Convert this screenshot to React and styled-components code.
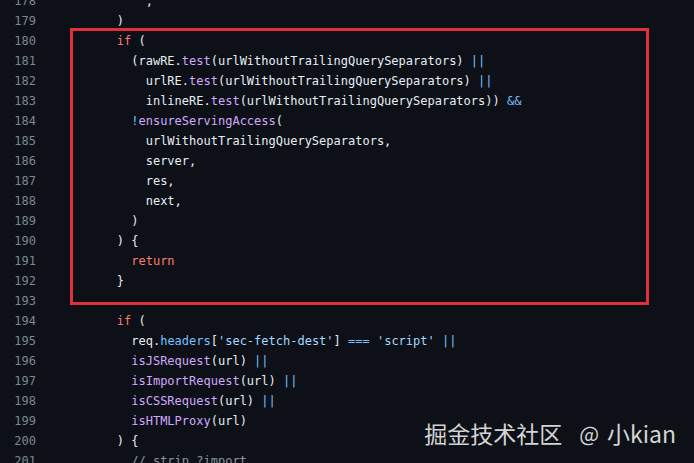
import styled, { createGlobalStyle } from "styled-components";

const lines = [
  { n: 178, t: [["", "            ,"]] },
  { n: 179, t: [["", "        )"]] },
  { n: 180, t: [["", "        "], ["kw", "if"], ["", " ("]] },
  { n: 181, t: [["", "          (rawRE."], ["fn", "test"], ["", "(urlWithoutTrailingQuerySeparators) "], ["op", "||"]] },
  { n: 182, t: [["", "            urlRE."], ["fn", "test"], ["", "(urlWithoutTrailingQuerySeparators) "], ["op", "||"]] },
  { n: 183, t: [["", "            inlineRE."], ["fn", "test"], ["", "(urlWithoutTrailingQuerySeparators)) "], ["op", "&&"]] },
  { n: 184, t: [["", "          "], ["op", "!"], ["fn", "ensureServingAccess"], ["", "("]] },
  { n: 185, t: [["", "            urlWithoutTrailingQuerySeparators,"]] },
  { n: 186, t: [["", "            server,"]] },
  { n: 187, t: [["", "            res,"]] },
  { n: 188, t: [["", "            next,"]] },
  { n: 189, t: [["", "          )"]] },
  { n: 190, t: [["", "        ) {"]] },
  { n: 191, t: [["", "          "], ["kw", "return"]] },
  { n: 192, t: [["", "        }"]] },
  { n: 193, t: [["", ""]] },
  { n: 194, t: [["", "        "], ["kw", "if"], ["", " ("]] },
  { n: 195, t: [["", "          req."], ["op", "headers"], ["", "["], ["str", "'sec-fetch-dest'"], ["", "] "], ["op", "==="], ["", " "], ["str", "'script'"], ["", " "], ["op", "||"]] },
  { n: 196, t: [["", "          "], ["fn", "isJSRequest"], ["", "(url) "], ["op", "||"]] },
  { n: 197, t: [["", "          "], ["fn", "isImportRequest"], ["", "(url) "], ["op", "||"]] },
  { n: 198, t: [["", "          "], ["fn", "isCSSRequest"], ["", "(url) "], ["op", "||"]] },
  { n: 199, t: [["", "          "], ["fn", "isHTMLProxy"], ["", "(url)"]] },
  { n: 200, t: [["", "        ) {"]] },
  { n: 201, t: [["", "          "], ["cm", "// strip ?import"]] },
];

export default function App() {
  return (
    <>
      <GlobalStyle />
      <SCViewer>
        <SCLines>
          {lines.map((line) => (
            <SCRow key={line.n}>
              <SCLineNo>{line.n}</SCLineNo>
              <SCCode>
                {line.t.map(([kind, text], i) => (
                  <SCToken key={i} kind={kind}>{text}</SCToken>
                ))}
              </SCCode>
            </SCRow>
          ))}
        </SCLines>
        <SCHighlight />
        <SCWatermark>
          掘金技术社区<SCAt>@</SCAt>小kian
        </SCWatermark>
      </SCViewer>
    </>
  );
}

const colors = {
  kw: "#ff7b72",
  fn: "#d2a8ff",
  op: "#79c0ff",
  str: "#a5d6ff",
  cm: "#8b949e",
};

const GlobalStyle = createGlobalStyle`
  body {
    margin: 0;
    background: #0d1117;
  }
`;

const SCViewer = styled.div`
  position: relative;
  width: 694px;
  height: 463px;
  overflow: hidden;
  background: #0d1117;
`;

const SCLines = styled.div`
  margin-top: -9px;
  display: flex;
  flex-direction: column;
`;

const SCRow = styled.div`
  display: flex;
  height: 20px;
  line-height: 20px;
  font-family: "DejaVu Sans Mono", "Liberation Mono", monospace;
  font-size: 12px;
`;

const SCLineNo = styled.div`
  width: 36px;
  text-align: right;
  color: #7d8590;
  flex-shrink: 0;
`;

const SCCode = styled.div`
  margin-left: 23px;
  white-space: pre;
  color: #e6edf3;
`;

const SCToken = styled.span`
  color: ${(props) => colors[props.kind] || "#e6edf3"};
`;

const SCHighlight = styled.div`
  position: absolute;
  left: 70px;
  top: 28px;
  width: 579px;
  height: 277px;
  box-sizing: border-box;
  border: 3px solid #e0313b;
`;

const SCWatermark = styled.div`
  position: absolute;
  right: 18px;
  top: 418px;
  display: flex;
  align-items: center;
  font-family: "Noto Sans CJK SC", "Noto Sans", sans-serif;
  font-size: 23px;
  line-height: 30px;
  color: rgba(240, 240, 240, 0.88);
`;

const SCAt = styled.span`
  margin: 0 8px 0 17px;
  font-size: 21px;
`;
